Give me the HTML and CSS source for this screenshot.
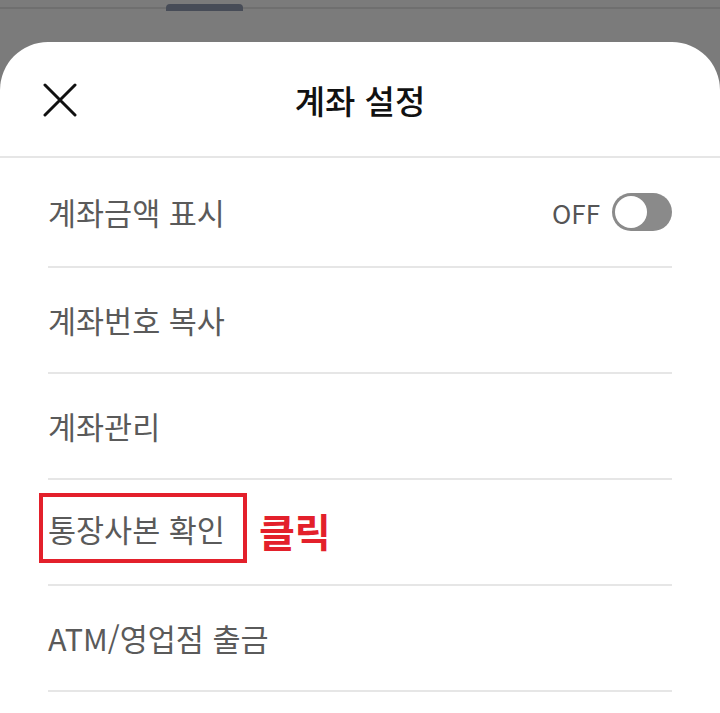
FILE: index.html
```html
<!DOCTYPE html>
<html lang="ko">

<head>
    <meta charset="UTF-8">
    <meta name="viewport" content="width=device-width, initial-scale=1.0">
    <link rel="stylesheet" href="styles.css">
    <title>계좌 설정</title>
</head>

<body>
    <div class="backdrop">
        <div class="backdrop-line"></div>
        <div class="handle"></div>
    </div>

    <section class="sheet">
        <header class="sheet-header">
            <button class="close-btn" aria-label="닫기">
                <svg width="34" height="34" viewBox="0 0 34 34">
                    <path d="M2 2 L32 32 M32 2 L2 32" stroke="#111" stroke-width="3" stroke-linecap="round" fill="none" />
                </svg>
            </button>
            <h1>계좌 설정</h1>
        </header>

        <ul class="menu">
            <li class="menu-item">
                <span>계좌금액 표시</span>
                <div class="switch-wrap">
                    <span class="switch-label">OFF</span>
                    <span class="switch"><span class="knob"></span></span>
                </div>
            </li>
            <li class="menu-item"><span>계좌번호 복사</span></li>
            <li class="menu-item"><span>계좌관리</span></li>
            <li class="menu-item">
                <span class="highlight">통장사본 확인</span>
                <span class="click-note">클릭</span>
            </li>
            <li class="menu-item"><span>ATM/영업점 출금</span></li>
        </ul>
    </section>
</body>

</html>
```

FILE: styles.css
```css
body {
    margin: 0;
    padding: 0;
    background: #7b7b7b;
    font-family: 'Noto Sans CJK KR', 'Noto Sans', sans-serif;
    overflow: hidden;
}

.backdrop {
    height: 42px;
    padding-top: 7px;
    box-sizing: border-box;
    position: relative;
}

.backdrop-line {
    height: 2px;
    background: #6f6f6f;
}

.handle {
    position: absolute;
    top: 4px;
    left: 166px;
    width: 77px;
    height: 7px;
    border-radius: 4px 4px 0 0;
    background: #474c57;
}

.sheet {
    background: #fff;
    border-radius: 48px 48px 0 0;
    min-height: 671px;
}

.sheet-header {
    height: 114px;
    border-bottom: 2px solid #e6e6e6;
    display: flex;
    align-items: center;
    justify-content: center;
    position: relative;
}

.sheet-header h1 {
    margin: 0;
    font-size: 33px;
    font-weight: 500;
    color: #111;
    padding-top: 2px;
}

.close-btn {
    position: absolute;
    left: 43px;
    top: 41px;
    background: none;
    border: none;
    padding: 0;
    line-height: 0;
}

.menu {
    list-style: none;
    margin: 0;
    padding: 0 48px;
}

.menu-item {
    height: 106px;
    box-sizing: border-box;
    border-bottom: 2px solid #e6e6e6;
    display: flex;
    align-items: center;
    font-size: 30.5px;
    color: #5a5a5a;
}

.menu-item:first-child {
    height: 110px;
}

.switch-wrap {
    margin-left: auto;
    display: flex;
    align-items: center;
    gap: 12px;
}

.switch-label {
    font-size: 26px;
    color: #555;
}

.switch {
    width: 60px;
    height: 38px;
    border-radius: 19px;
    background: #8a8a8a;
    display: flex;
    align-items: center;
    padding-left: 3px;
    box-sizing: border-box;
}

.knob {
    width: 32px;
    height: 32px;
    border-radius: 50%;
    background: #fff;
}

.highlight {
    border: 4px solid #e3202b;
    margin-left: -9px;
    margin-top: -8px;
    padding: 10px 18px 8px 5px;
}

.click-note {
    margin-left: 12px;
    font-size: 39px;
    font-weight: 700;
    color: #e3202b;
    padding-bottom: 4px;
}
```
